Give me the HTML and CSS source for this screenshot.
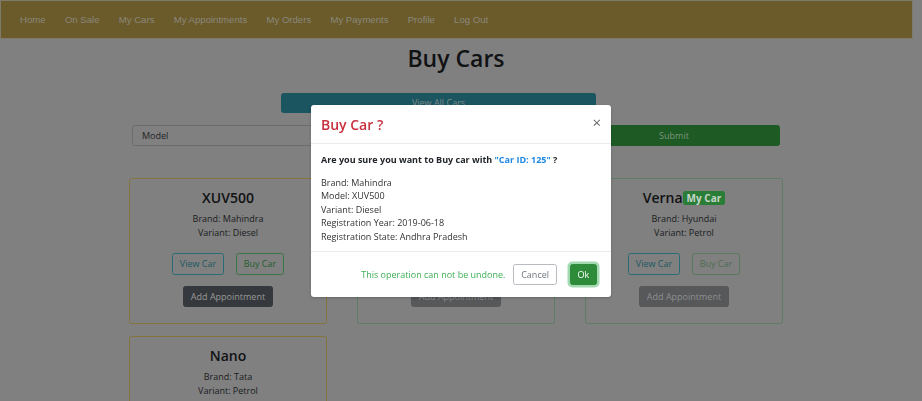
FILE: index.html
```html
<!DOCTYPE html>
<html lang="en">
<head>
<meta charset="utf-8">
<title>Buy Cars</title>
<link rel="stylesheet" href="styles.css">
</head>
<body>
<div class="page">
  <nav class="navbar">
    <a class="nav-link" href="#">Home</a>
    <a class="nav-link" href="#">On Sale</a>
    <a class="nav-link" href="#">My Cars</a>
    <a class="nav-link" href="#">My Appointments</a>
    <a class="nav-link" href="#">My Orders</a>
    <a class="nav-link" href="#">My Payments</a>
    <a class="nav-link" href="#">Profile</a>
    <a class="nav-link" href="#">Log Out</a>
  </nav>
  <main class="container">
    <h1 class="page-title">Buy Cars</h1>
    <div class="view-row">
      <button class="btn btn-info view-all">View All Cars</button>
    </div>
    <form class="search-form">
      <input class="form-control" type="text" value="Model">
      <button class="btn btn-success submit" type="button">Submit</button>
    </form>
    <div class="card-grid">
      <div class="card card-warning">
        <h3 class="card-title">XUV500</h3>
        <p class="card-text">Brand: Mahindra<br>Variant: Diesel</p>
        <div class="btn-pair">
          <button class="btn btn-outline-info">View Car</button>
          <button class="btn btn-outline-success">Buy Car</button>
        </div>
        <button class="btn btn-dark">Add Appointment</button>
      </div>
      <div class="card card-success">
        <h3 class="card-title">Creta<span class="badge">My Car</span></h3>
        <p class="card-text">Brand: Hyundai<br>Variant: Diesel</p>
        <div class="btn-pair">
          <button class="btn btn-outline-info">View Car</button>
          <button class="btn btn-outline-success disabled">Buy Car</button>
        </div>
        <button class="btn btn-dark disabled">Add Appointment</button>
      </div>
      <div class="card card-success">
        <h3 class="card-title">Verna<span class="badge">My Car</span></h3>
        <p class="card-text">Brand: Hyundai<br>Variant: Petrol</p>
        <div class="btn-pair">
          <button class="btn btn-outline-info">View Car</button>
          <button class="btn btn-outline-success disabled">Buy Car</button>
        </div>
        <button class="btn btn-dark disabled">Add Appointment</button>
      </div>
      <div class="card card-warning">
        <h3 class="card-title">Nano</h3>
        <p class="card-text">Brand: Tata<br>Variant: Petrol</p>
        <div class="btn-pair">
          <button class="btn btn-outline-info">View Car</button>
          <button class="btn btn-outline-success">Buy Car</button>
        </div>
        <button class="btn btn-dark">Add Appointment</button>
      </div>
    </div>
  </main>
</div>

<div class="modal-wrap">
  <div class="modal">
    <div class="modal-header">
      <h5 class="modal-title">Buy Car ?</h5>
      <span class="close">&times;</span>
    </div>
    <div class="modal-body">
      <p class="confirm">Are you sure you want to Buy car with <span class="car-id">"Car ID: 125"</span> ?</p>
      <p class="details">Brand: Mahindra<br>Model: XUV500<br>Variant: Diesel<br>Registration Year: 2019-06-18<br>Registration State: Andhra Pradesh</p>
    </div>
    <div class="modal-footer">
      <span class="warn">This operation can not be undone.</span>
      <button class="btn btn-cancel">Cancel</button>
      <button class="btn btn-ok">Ok</button>
    </div>
  </div>
</div>
</body>
</html>
```
FILE: styles.css
```css
* { box-sizing: border-box; }
html, body {
  margin: 0;
  padding: 0;
  background-color: #808080;
}
body {
  width: 922px;
  height: 401px;
  overflow: hidden;
  font-family: "Open Sans", "Noto Sans", sans-serif;
  font-size: 9px;
  line-height: 13.5px;
  color: #101214;
}
/* page content, shown in the dimmed colours it has behind the open modal */
.page {
  width: 912px;
  min-height: 420px;
  background-color: #808080;
}

/* navbar */
.navbar {
  height: 39px;
  width: 913px;
  background-color: #6b5b2a;
  border: 1px solid #7e7a6c;
  display: flex;
  align-items: center;
  padding-left: 9.5px;
}
.nav-link {
  font-family: "Liberation Sans", Arial, sans-serif;
  font-size: 9.6px;
  color: #8a877c;
  text-decoration: none;
  padding: 0 9.6px;
}

/* main */
.container {
  width: 654px;
  margin: 0 auto;
}
.page-title {
  margin: 5px 0 0;
  text-align: center;
  font-size: 23px;
  line-height: 29px;
  font-weight: 600;
  color: #101214;
}
.view-row { margin-top: 20px; padding-left: 152px; }

.btn {
  font-family: inherit;
  font-size: 9px;
  line-height: 13.5px;
  padding: 3px 6.75px;
  border: 1px solid transparent;
  border-radius: 2.5px;
  background-color: transparent;
  cursor: pointer;
}
.btn-info { background-color: #1a5560; border-color: #1a5560; color: #7f8a8c; }
.view-all { width: 315px; height: 20px; padding: 0; }

.search-form {
  display: flex;
  gap: 12px;
  margin: 12px 3px 0;
}
.form-control {
  flex: 1;
  height: 21px;
  font-family: inherit;
  font-size: 9px;
  color: #202326;
  padding: 0 9px;
  border: 1px solid #6a6d70;
  border-radius: 2.5px;
  background-color: #808080;
}
.btn-success { background-color: #1e5a24; border-color: #1e5a24; color: #7c947e; }
.submit { width: 212px; height: 21px; padding: 0; }

/* cards */
.card-grid {
  margin-top: 32px;
  display: grid;
  grid-template-columns: repeat(3, 198px);
  column-gap: 30px;
  row-gap: 12px;
}
.card {
  border: 1px solid #777;
  border-radius: 2.5px;
  padding: 10px 8px 16px;
  text-align: center;
  background-color: #808080;
}
.card-warning { border-color: #85743e; }
.card-success { border-color: #5f7c64; }
.card-title {
  margin: 0;
  font-size: 14px;
  line-height: 17px;
  font-weight: 600;
  color: #101214;
}
.badge {
  display: inline-block;
  vertical-align: 1px;
  background-color: #2a7d37;
  color: #c6d6c8;
  font-size: 10px;
  line-height: 14px;
  font-weight: 700;
  padding: 0 4px;
  border-radius: 2.5px;
}
.card-text { margin: 6px 0 0; color: #1a1c1e; }
.btn-pair {
  display: flex;
  justify-content: center;
  gap: 12px;
  margin-top: 14px;
}
.btn-outline-info { color: #1d5962; border-color: #2a6c76; }
.btn-outline-success { color: #255e2e; border-color: #3b7444; }
.btn-dark { background-color: #35383c; border-color: #35383c; color: #9a9a9a; margin-top: 11px; }
.disabled { opacity: 0.55; }

/* modal layer */
.modal-wrap {
  position: fixed;
  top: 0;
  left: 0;
  width: 922px;
  height: 401px;
  z-index: 20;
  display: flex;
  justify-content: center;
  align-items: flex-start;
  padding-top: 105px;
}
.modal {
  width: 300px;
  background-color: #ffffff;
  border-radius: 3px;
  box-shadow: 0 1px 3px rgba(0,0,0,0.2);
}
.modal-header {
  height: 39px;
  display: flex;
  align-items: center;
  justify-content: space-between;
  padding: 0 10px 0 10px;
  border-bottom: 1px solid #e9ecef;
}
.modal-title {
  margin: 0;
  font-size: 14px;
  line-height: 17px;
  font-weight: 600;
  color: #c8303f;
}
.close {
  font-size: 15px;
  color: #666;
  line-height: 15px;
  margin-top: -4px;
}
.modal-body { padding: 9px 10px 8px; color: #212529; }
.confirm { margin: 0 0 9px; font-weight: 700; }
.car-id { color: #1e88e5; }
.details { margin: 0; color: #333; }
.modal-footer {
  height: 46px;
  border-top: 1px solid #e9ecef;
  display: flex;
  align-items: center;
  justify-content: flex-end;
  padding-right: 14px;
}
.warn { color: #3fae55; margin-right: 8px; }
.btn-cancel {
  background-color: #fff;
  border-color: #b8bcc0;
  color: #6c757d;
  margin-right: 13px;
  height: 21px;
}
.btn-ok {
  background-color: #2e8b3a;
  border-color: #2e8b3a;
  color: #fff;
  height: 21px;
  box-shadow: 0 0 0 2.5px rgba(72, 180, 97, 0.5);
}
```
